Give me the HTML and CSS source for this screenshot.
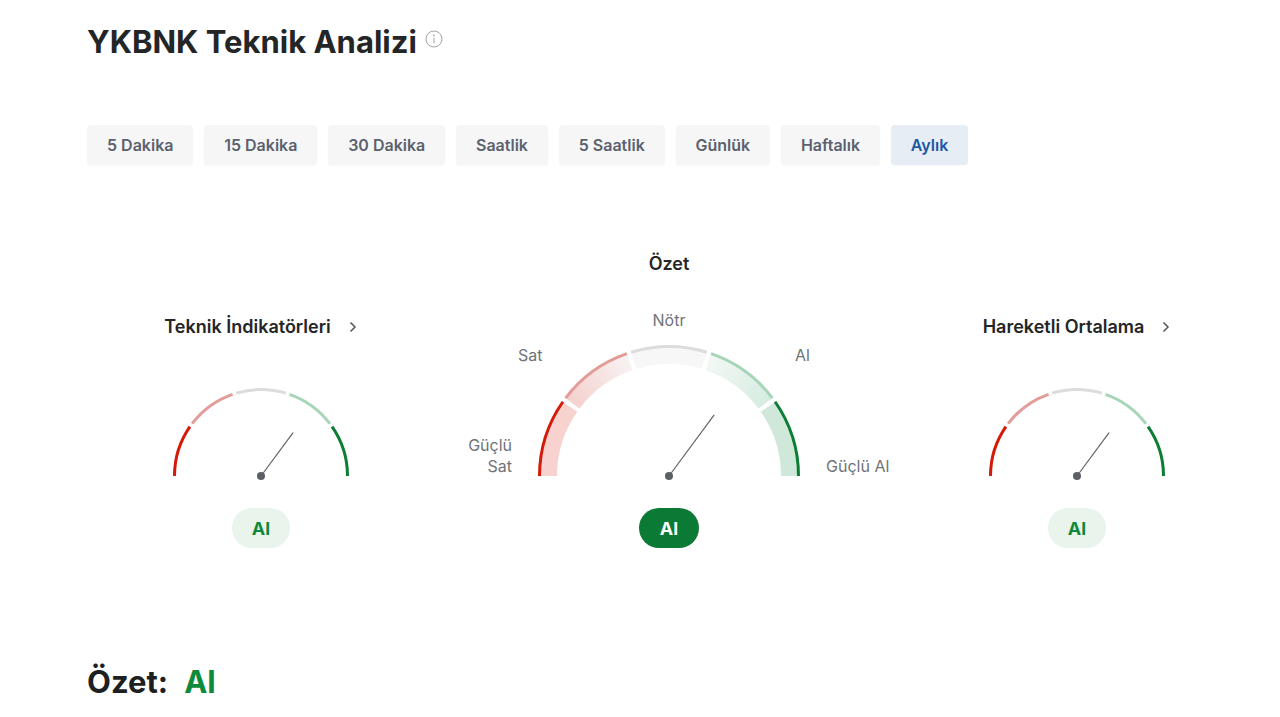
FILE: index.html
```html
<!DOCTYPE html>
<html lang="tr">
<head>
<meta charset="utf-8">
<title>YKBNK Teknik Analizi</title>
<link rel="stylesheet" href="styles.css">
</head>
<body>
<main class="page">
  <header class="head">
    <h1 class="title">YKBNK Teknik Analizi</h1>
    <svg class="info" width="18" height="18" viewBox="0 0 18 18" aria-hidden="true">
      <circle cx="9" cy="9" r="8" fill="none" stroke="#a0a4ab" stroke-width="1"/>
      <circle cx="9" cy="5.4" r="0.9" fill="#a0a4ab"/>
      <line x1="9" y1="7.8" x2="9" y2="13.2" stroke="#a0a4ab" stroke-width="1.1"/>
    </svg>
  </header>

  <nav class="tabs">
    <button class="tab">5 Dakika</button>
    <button class="tab">15 Dakika</button>
    <button class="tab">30 Dakika</button>
    <button class="tab">Saatlik</button>
    <button class="tab">5 Saatlik</button>
    <button class="tab">Günlük</button>
    <button class="tab">Haftalık</button>
    <button class="tab tab-active">Aylık</button>
  </nav>

  <section class="gauges">
    <div class="gauge-col">
      <div class="gauge-title">Teknik İndikatörleri
        <svg class="chev" width="10" height="12" viewBox="0 0 10 12" aria-hidden="true"><polyline points="2.5,1.5 7,6 2.5,10.5" fill="none" stroke="#555" stroke-width="1.5"/></svg>
      </div>
      <svg class="gauge-sm" width="184" height="100" viewBox="0 0 184 100">
        <g fill="none" stroke-width="3">
          <path d="M 5.5 93 A 86.5 86.5 0 0 1 178.5 93" pathLength="180" stroke="#d41a08" stroke-dasharray="34.75 400" stroke-dashoffset="0"/>
          <path d="M 5.5 93 A 86.5 86.5 0 0 1 178.5 93" pathLength="180" stroke="#e29d98" stroke-dasharray="33.5 400" stroke-dashoffset="-37.25"/>
          <path d="M 5.5 93 A 86.5 86.5 0 0 1 178.5 93" pathLength="180" stroke="#dcdcdc" stroke-dasharray="33.5 400" stroke-dashoffset="-73.25"/>
          <path d="M 5.5 93 A 86.5 86.5 0 0 1 178.5 93" pathLength="180" stroke="#a6d5b9" stroke-dasharray="33.5 400" stroke-dashoffset="-109.25"/>
          <path d="M 5.5 93 A 86.5 86.5 0 0 1 178.5 93" pathLength="180" stroke="#0c7d35" stroke-dasharray="34.75 400" stroke-dashoffset="-145.25"/>
        </g>
        <line x1="92" y1="93" x2="124.1" y2="49.6" stroke="#5f636a" stroke-width="1.2"/>
        <circle cx="92" cy="93" r="4" fill="#5b5f66"/>
      </svg>
      <div class="pill pill-soft">Al</div>
    </div>

    <div class="gauge-col">
      <div class="gauge-title">Özet</div>
      <svg class="gauge-lg" width="440" height="176" viewBox="0 0 440 176">
        <defs>
          <linearGradient id="sellGrad" gradientUnits="userSpaceOnUse" x1="122" y1="95" x2="183" y2="51">
            <stop offset="0" stop-color="#f4d0cd"/>
            <stop offset="1" stop-color="#f8f3f3"/>
          </linearGradient>
          <linearGradient id="buyGrad" gradientUnits="userSpaceOnUse" x1="258" y1="51" x2="318" y2="95">
            <stop offset="0" stop-color="#f3f8f5"/>
            <stop offset="1" stop-color="#d5ecdf"/>
          </linearGradient>
        </defs>
        <g fill="none" stroke-width="18">
          <path d="M 99 166 A 121 121 0 0 1 341 166" pathLength="180" stroke="#f8d2ce" stroke-dasharray="35 400" stroke-dashoffset="0"/>
          <path d="M 99 166 A 121 121 0 0 1 341 166" pathLength="180" stroke="url(#sellGrad)" stroke-dasharray="34 400" stroke-dashoffset="-37"/>
          <path d="M 99 166 A 121 121 0 0 1 341 166" pathLength="180" stroke="#f7f7f7" stroke-dasharray="34 400" stroke-dashoffset="-73"/>
          <path d="M 99 166 A 121 121 0 0 1 341 166" pathLength="180" stroke="url(#buyGrad)" stroke-dasharray="34 400" stroke-dashoffset="-109"/>
          <path d="M 99 166 A 121 121 0 0 1 341 166" pathLength="180" stroke="#cfe8d9" stroke-dasharray="35 400" stroke-dashoffset="-145"/>
        </g>
        <g fill="none" stroke-width="3">
          <path d="M 90.5 166 A 129.5 129.5 0 0 1 349.5 166" pathLength="180" stroke="#d41a08" stroke-dasharray="35 400" stroke-dashoffset="0"/>
          <path d="M 90.5 166 A 129.5 129.5 0 0 1 349.5 166" pathLength="180" stroke="#e29d98" stroke-dasharray="34 400" stroke-dashoffset="-37"/>
          <path d="M 90.5 166 A 129.5 129.5 0 0 1 349.5 166" pathLength="180" stroke="#dcdcdc" stroke-dasharray="34 400" stroke-dashoffset="-73"/>
          <path d="M 90.5 166 A 129.5 129.5 0 0 1 349.5 166" pathLength="180" stroke="#a6d5b9" stroke-dasharray="34 400" stroke-dashoffset="-109"/>
          <path d="M 90.5 166 A 129.5 129.5 0 0 1 349.5 166" pathLength="180" stroke="#0c7d35" stroke-dasharray="35 400" stroke-dashoffset="-145"/>
        </g>
        <line x1="220" y1="166" x2="265.2" y2="104.9" stroke="#5f636a" stroke-width="1.2"/>
        <circle cx="220" cy="166" r="4" fill="#5b5f66"/>
        <text class="glabel" x="220" y="16" text-anchor="middle">Nötr</text>
        <text class="glabel" x="69" y="51">Sat</text>
        <text class="glabel" x="346" y="51">Al</text>
        <text class="glabel" x="63" y="141" text-anchor="end">Güçlü</text>
        <text class="glabel" x="63" y="162" text-anchor="end">Sat</text>
        <text class="glabel" x="377" y="162">Güçlü Al</text>
      </svg>
      <div class="pill pill-strong">Al</div>
    </div>

    <div class="gauge-col">
      <div class="gauge-title">Hareketli Ortalama
        <svg class="chev" width="10" height="12" viewBox="0 0 10 12" aria-hidden="true"><polyline points="2.5,1.5 7,6 2.5,10.5" fill="none" stroke="#555" stroke-width="1.5"/></svg>
      </div>
      <svg class="gauge-sm" width="184" height="100" viewBox="0 0 184 100">
        <g fill="none" stroke-width="3">
          <path d="M 5.5 93 A 86.5 86.5 0 0 1 178.5 93" pathLength="180" stroke="#d41a08" stroke-dasharray="34.75 400" stroke-dashoffset="0"/>
          <path d="M 5.5 93 A 86.5 86.5 0 0 1 178.5 93" pathLength="180" stroke="#e29d98" stroke-dasharray="33.5 400" stroke-dashoffset="-37.25"/>
          <path d="M 5.5 93 A 86.5 86.5 0 0 1 178.5 93" pathLength="180" stroke="#dcdcdc" stroke-dasharray="33.5 400" stroke-dashoffset="-73.25"/>
          <path d="M 5.5 93 A 86.5 86.5 0 0 1 178.5 93" pathLength="180" stroke="#a6d5b9" stroke-dasharray="33.5 400" stroke-dashoffset="-109.25"/>
          <path d="M 5.5 93 A 86.5 86.5 0 0 1 178.5 93" pathLength="180" stroke="#0c7d35" stroke-dasharray="34.75 400" stroke-dashoffset="-145.25"/>
        </g>
        <line x1="92" y1="93" x2="124.1" y2="49.6" stroke="#5f636a" stroke-width="1.2"/>
        <circle cx="92" cy="93" r="4" fill="#5b5f66"/>
      </svg>
      <div class="pill pill-soft">Al</div>
    </div>
  </section>

  <div class="summary">
    <span>Özet:</span>
    <span class="summary-value">Al</span>
  </div>
</main>
</body>
</html>
```

FILE: styles.css
```css
* {
  box-sizing: border-box;
}

html, body {
  margin: 0;
  padding: 0;
  background: #ffffff;
}

body {
  font-family: Inter, "Noto Sans", "Liberation Sans", sans-serif;
  color: #232526;
}

.page {
  width: 1164px;
  margin-left: 87px;
}

.head {
  display: flex;
  align-items: flex-start;
  gap: 8px;
  padding-top: 22px;
}

.title {
  margin: 0;
  font-size: 31px;
  line-height: 40px;
  font-weight: 700;
  color: #232526;
}

.info {
  margin-top: 8px;
  flex: none;
}

.tabs {
  display: flex;
  gap: 10.75px;
  margin-top: 63px;
}

.tab {
  height: 40px;
  padding: 0 20px;
  border: none;
  border-radius: 4px;
  background: #f6f6f7;
  box-shadow: 0 1px 2px rgba(0, 0, 0, 0.03);
  font-family: inherit;
  font-size: 16px;
  font-weight: 600;
  color: #5b616e;
  cursor: pointer;
}

.tab-active {
  background: #e7edf5;
  color: #1b58a5;
}

.gauges {
  display: flex;
  justify-content: space-between;
  align-items: flex-end;
  margin-top: 89px;
}

.gauge-col {
  width: 348px;
  display: flex;
  flex-direction: column;
  align-items: center;
}

.gauge-title {
  display: flex;
  align-items: center;
  gap: 17px;
  font-size: 18px;
  line-height: 20px;
  font-weight: 600;
  color: #232526;
  white-space: nowrap;
}

.chev {
  flex: none;
}

.gauge-sm {
  display: block;
  margin-top: 46px;
  flex: none;
}

.gauge-lg {
  display: block;
  margin-top: 36px;
  flex: none;
}

.glabel {
  font-family: Inter, "Noto Sans", sans-serif;
  font-size: 16px;
  fill: #707379;
}

.pill {
  display: flex;
  align-items: center;
  justify-content: center;
  height: 40px;
  border-radius: 20px;
  font-size: 18px;
  font-weight: 700;
}

.gauge-sm + .pill {
  margin-top: 25px;
}

.gauge-lg + .pill {
  margin-top: 22px;
}

.pill-soft {
  width: 58px;
  background: #e8f4ec;
  color: #0e8a3c;
}

.pill-strong {
  width: 60px;
  background: #0b7a34;
  color: #ffffff;
}

.summary {
  display: flex;
  gap: 16px;
  margin-top: 114px;
  font-size: 31px;
  line-height: 40px;
  font-weight: 700;
  color: #1e1f21;
}

.summary-value {
  color: #0e8a3c;
}
```
